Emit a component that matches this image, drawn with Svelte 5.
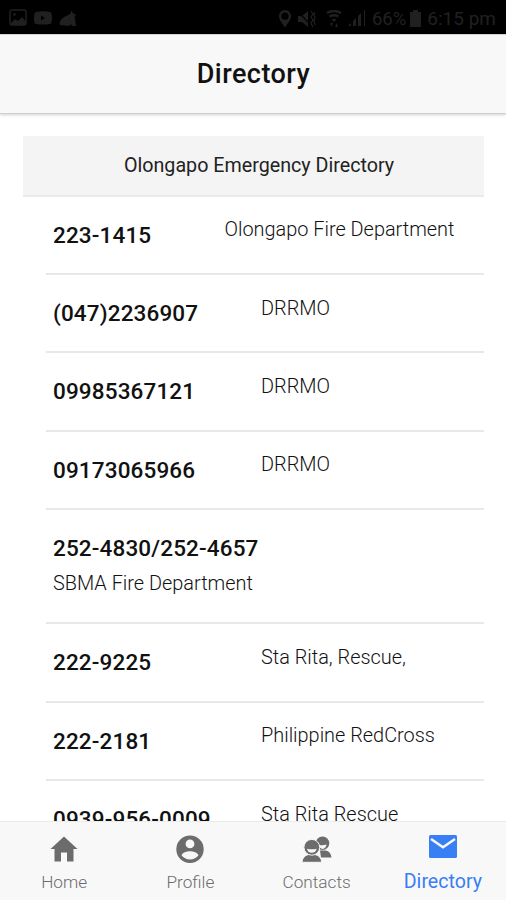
<script lang="ts">
  interface Entry {
    number: string;
    name: string;
    layout?: 'wide' | 'stacked';
  }

  const entries: Entry[] = [
    { number: '223-1415', name: 'Olongapo Fire Department', layout: 'wide' },
    { number: '(047)2236907', name: 'DRRMO' },
    { number: '09985367121', name: 'DRRMO' },
    { number: '09173065966', name: 'DRRMO' },
    { number: '252-4830/252-4657', name: 'SBMA Fire Department', layout: 'stacked' },
    { number: '222-9225', name: 'Sta Rita, Rescue,' },
    { number: '222-2181', name: 'Philippine RedCross' },
    { number: '0939-956-0009', name: 'Sta Rita Rescue' },
  ];

  const tabs = ['Home', 'Profile', 'Contacts', 'Directory'];
  let active = $state('Directory');
</script>

<div class="app">
  <div class="status">
    <div class="left">
      <svg width="18" height="18" viewBox="0 0 18 18">
        <rect x="1" y="1" width="16" height="15" rx="2" fill="none" stroke="currentColor" stroke-width="1.5" />
        <path d="M2 14l4-4 3 2 4-4 4 5v3H2z" fill="currentColor" />
        <circle cx="5.5" cy="5.5" r="1.3" fill="currentColor" />
      </svg>
      <svg width="20" height="18" viewBox="0 0 20 18">
        <path fill="currentColor" fill-rule="evenodd" d="M3 3Q10 1.500 17 3Q19 3 19 9Q19 15 17 15Q10 16 3 15Q1 15 1 9Q1 3 3 3zM8 6.500v5l4-2.500z" />
      </svg>
      <svg width="18" height="18" viewBox="0 0 18 18">
        <path fill="currentColor" d="M1 16c-1-4 2-7 6-9 2-1 4-1 5-4l1-2 .5 3 4 2-2 1 1.500 10h-4l-1-2-2 2z" />
      </svg>
    </div>
    <div class="right">
      <svg class="pin" width="14" height="18" viewBox="0 0 14 18">
        <path fill="currentColor" fill-rule="evenodd" d="M7 0a6 6 0 0 1 6 6.200C13 10 9.500 13 7 17.500 4.500 13 1 10 1 6.200A6 6 0 0 1 7 0zm0 2.600a3.600 3.600 0 1 0 0 7.200A3.600 3.600 0 0 0 7 2.600z" />
      </svg>
      <svg class="mute" width="18" height="18" viewBox="0 0 18 18">
        <path fill="currentColor" d="M0 6h4l6-5v16l-6-5H0z" />
        <path d="M0 2l13 13" stroke="#000" stroke-width="1.200" />
        <path d="M13 1l2 3-2 3 2 3-2 3 2 4M17 2l-1 3 1 3-1 3 1 4" stroke="currentColor" fill="none" stroke-width="1.200" />
      </svg>
      <svg class="wifi" width="16" height="18" viewBox="0 0 16 18">
        <path d="M1 3Q8-1 15 3M3.500 6.500Q8 4 12.500 6.500" stroke="currentColor" stroke-width="2.500" fill="none" />
        <path fill="currentColor" d="M5.500 9.500Q8 8 10.500 9.500L8 12zM4 13h3l-1.500 4zM9 17h3l-1.500-4z" />
      </svg>
      <svg class="signal" width="18" height="18" viewBox="0 0 18 18">
        <path fill="currentColor" d="M0 16l3-3v3zM5 11l3-3v8H5zM10 6l3-3v13h-3zM16 0h1v16h-1z" />
      </svg>
      <span class="pct">66%</span>
      <svg class="battery" width="11" height="18" viewBox="0 0 11 18">
        <path fill="currentColor" d="M3 0h5v2h3v15H0V2h3z" />
      </svg>
      <span class="clock">6:15 pm</span>
    </div>
  </div>

  <header>
    <h1>Directory</h1>
  </header>

  <main>
    <div class="list-header"><span>Olongapo Emergency Directory</span></div>
    <ul>
      {#each entries as e (e.number)}
        <li class={e.layout}>
          <strong>{e.number}</strong>
          <span class="name">{e.name}</span>
        </li>
      {/each}
    </ul>
  </main>

  <nav>
    {#each tabs as t (t)}
      <button class:active={active === t} onclick={() => (active = t)}>
        <svg width="32" height="30" viewBox="0 0 32 30" aria-hidden="true">
          {#if t === 'Home'}
            <path fill="currentColor" d="M16 1.500L2.500 14h4v12.500H13v-9h6v9h6.500V14h4z" />
          {:else if t === 'Profile'}
            <path
              fill="currentColor"
              fill-rule="evenodd"
              d="M16 .5a13.700 13.700 0 1 0 0 27.400A13.700 13.700 0 0 0 16 .5zm0 4a4.400 4.400 0 1 1 0 8.800A4.400 4.400 0 0 1 16 4.500zm0 20c-3.600 0-6.700-1.600-8.500-4.200 1-2.700 5.300-4 8.500-4s7.500 1.300 8.500 4C22.700 22.900 19.600 24.500 16 24.500z"
            />
          {:else if t === 'Contacts'}
            <!-- back person, then front person with a light outline -->
            <g fill="currentColor">
              <circle cx="21.500" cy="8.300" r="6.800" />
              <path d="M19 15.500h6c3.500 1 5 3.500 5.500 7H20z" />
            </g>
            <path d="M18 10q4 .8 7.500-.4-.5 3.900-4 4.400-3-.5-3.500-4z" fill="#f8f8f8" />
            <g fill="currentColor" stroke="#f8f8f8" stroke-width="1">
              <path d="M7.500 19.500h6.500c4 .8 6.300 3.400 6.800 7.800H.9c.5-4.400 2.800-7 6.600-7.800z" />
              <circle cx="10.800" cy="12.300" r="7.900" />
            </g>
            <path d="M6 13.800q4.800 1 9.600 0-.8 3.800-4.800 4-4-.2-4.800-4z" fill="#f8f8f8" />
          {:else}
            <path fill="currentColor" d="M3.500 0h25q1.500 0 1.500 1.500v20q0 1.500-1.500 1.500h-25Q2 23 2 21.500v-20Q2 0 3.500 0z" />
            <path d="M4 4L16 12.300 28 4" fill="none" stroke="#f8f8f8" stroke-width="2.500" />
          {/if}
        </svg>
        <span>{t}</span>
      </button>
    {/each}
  </nav>
</div>

<style>
  :global(body) { margin: 0; background: #fff; }
  .app {
    display: flex; flex-direction: column; height: 900px; overflow: hidden;
    font-family: Roboto, "Liberation Sans", sans-serif; color: #111;
  }
  .status {
    flex: 0 0 34px; display: flex; justify-content: space-between; box-sizing: border-box;
    padding: 0 10px 0 9px; background: #000; color: #202020; font-size: 19px;
  }
  .left, .right { display: flex; align-items: center; }
  .left { gap: 6px; padding-top: 2px; }
  .right { padding-top: 3px; }
  .mute { margin-left: 6px; }
  .wifi { margin-left: 10px; }
  .signal { margin-left: 6px; }
  .pct { margin-left: 6px; font-size: 18.5px; }
  .battery { margin: 0 6px 0 4px; }

  header {
    flex: 0 0 80px; display: flex; align-items: center; justify-content: center;
    box-sizing: border-box; position: relative; background: #f8f8f8; border-top: 1px solid #d4d4d4;
    border-bottom: 1px solid #d0d0d0; box-shadow: 0 1px 3px rgba(0, 0, 0, 0.18);
  }
  h1 { margin: 0; padding-left: 1px; font-size: 27px; font-weight: 500; letter-spacing: 0.45px; line-height: 32px; }

  main { flex: 1; min-height: 0; overflow: hidden; padding: 22px 22px 0 23px; }
  .list-header {
    box-sizing: border-box; height: 60.6px; padding-left: 11px; display: flex; align-items: center;
    justify-content: center; background: #f4f4f4; border-bottom: 2px solid #eaeaea;
    font-size: 19.7px; color: #222;
  }
  ul { list-style: none; margin: 0; padding: 0 0 0 23px; }
  li {
    box-sizing: border-box; height: 78.4px; padding: 20px 0 0 7px; display: grid;
    grid-template-columns: 208px 1fr; align-items: start; border-bottom: 2px solid #e8e8e8;
  }
  li.wide { grid-template-columns: 171.5px 1fr; }
  li.stacked { display: flex; flex-direction: column; height: 114px; }
  strong { font-size: 22.5px; font-weight: 500; letter-spacing: 0.14px; line-height: 37px; white-space: nowrap; }
  .name { margin-top: 0.7px; font-size: 19.9px; font-weight: 300; line-height: 26px; white-space: nowrap; }
  .stacked .name { margin-top: 4px; }

  nav {
    flex: 0 0 79px; box-sizing: border-box; display: grid; grid-template-columns: repeat(4, 1fr);
    padding-left: 1px; background: #f8f8f8; border-top: 1px solid #ebebeb;
  }
  button {
    display: flex; flex-direction: column; align-items: center; padding: 13px 0 0;
    border: 0; background: none; color: #6c6c6c; font: 300 17.2px Roboto, sans-serif; cursor: pointer;
  }
  button span { margin-top: 7px; line-height: 20px; }
  button.active { color: #387ef5; font-size: 19.6px; font-weight: 400; }
</style>
